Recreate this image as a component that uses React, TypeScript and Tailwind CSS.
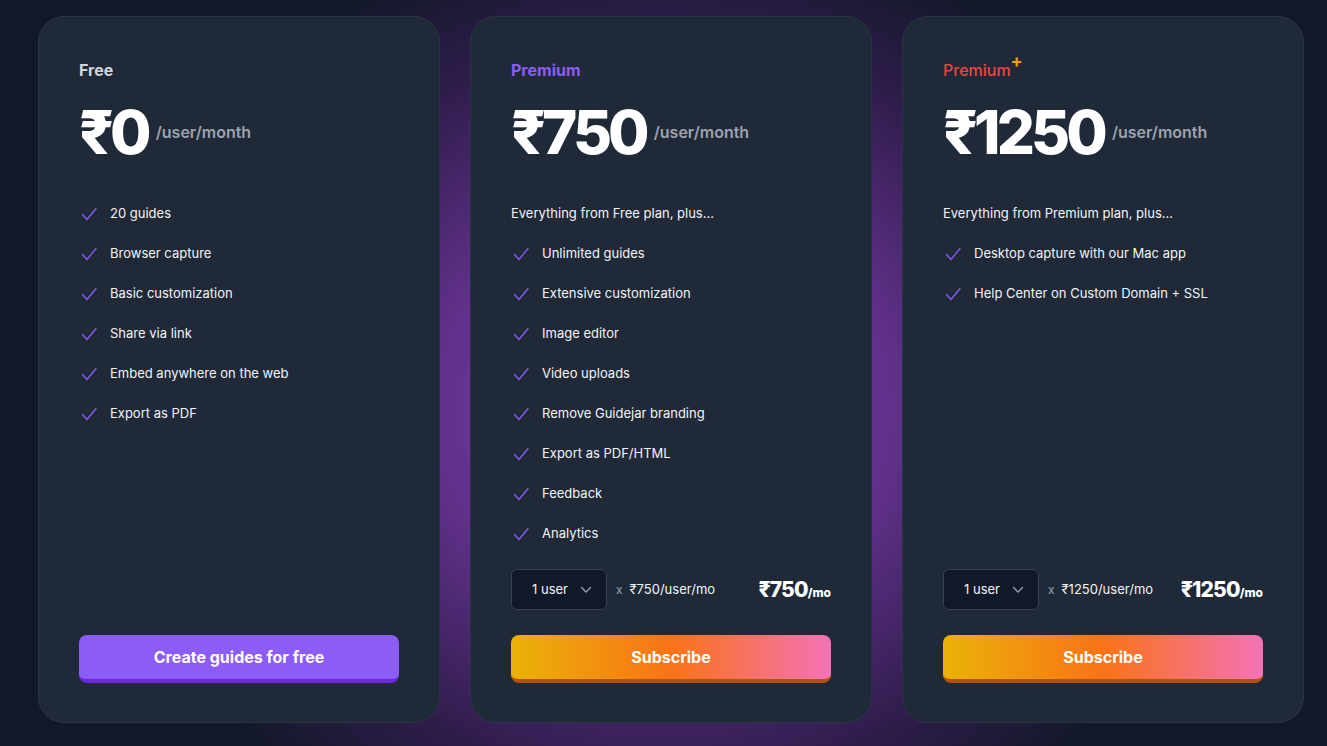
import React from "react";

const Check = () => (
  <svg width="16" height="14" viewBox="0 0 16 14" fill="none" className="shrink-0">
    <path d="M1.5 7.5 L6 12.5 L15 1.5" stroke="#8b5cf6" strokeWidth="1.3" strokeLinecap="round" strokeLinejoin="round" />
  </svg>
);

const Chevron = () => (
  <svg width="12" height="8" viewBox="0 0 12 8" fill="none">
    <path d="M1.5 1.5 L6 6 L10.5 1.5" stroke="#9ca3af" strokeWidth="1.3" strokeLinecap="round" strokeLinejoin="round" />
  </svg>
);

type Plan = {
  title: React.ReactNode;
  price: string;
  intro?: string;
  features: string[];
  perUser?: string;
  total?: string;
  button: string;
  free?: boolean;
};

const plans: Plan[] = [
  {
    title: <span className="text-[#d1d5db] font-bold">Free</span>,
    price: "₹0",
    features: ["20 guides", "Browser capture", "Basic customization", "Share via link", "Embed anywhere on the web", "Export as PDF"],
    button: "Create guides for free",
    free: true,
  },
  {
    title: <span className="text-[#8b5cf6] font-bold">Premium</span>,
    price: "₹750",
    intro: "Everything from Free plan, plus...",
    features: ["Unlimited guides", "Extensive customization", "Image editor", "Video uploads", "Remove Guidejar branding", "Export as PDF/HTML", "Feedback", "Analytics"],
    perUser: "₹750/user/mo",
    total: "₹750",
    button: "Subscribe",
  },
  {
    title: (
      <span className="text-[#ef4444] font-medium relative">
        Premium
        <span className="absolute -top-[8px] -right-[12px] text-[#f59e0b] text-[18px] font-bold leading-none">+</span>
      </span>
    ),
    price: "₹1250",
    intro: "Everything from Premium plan, plus...",
    features: ["Desktop capture with our Mac app", "Help Center on Custom Domain + SSL"],
    perUser: "₹1250/user/mo",
    total: "₹1250",
    button: "Subscribe",
  },
];

function Card({ plan }: { plan: Plan }) {
  return (
    <div className="w-[402px] h-[707px] shrink-0 rounded-[26px] bg-[#1f2937] border border-[#2b3545] px-[40px] pt-[42px] pb-[39px] flex flex-col">
      <div className="text-[16px] leading-[22px] h-[22px]">{plan.title}</div>
      <div className="flex items-center mt-[18px] h-[66px]">
        <span className="text-[60px] leading-none font-extrabold text-white tracking-[-0.065em]">{plan.price}</span>
        <span className="ml-[8px] text-[16px] font-semibold text-[#9ca3af]">/user/month</span>
      </div>
      <div className="mt-[29px] flex flex-col">
        {plan.intro && (
          <div className="h-[40px] flex items-center text-[13px] text-[#f3f4f6]">{plan.intro}</div>
        )}
        {plan.features.map((f) => (
          <div key={f} className="h-[40px] flex items-center gap-[13px] pl-[2px] text-[13px] text-[#f3f4f6]">
            <Check />
            <span>{f}</span>
          </div>
        ))}
      </div>
      <div className="mt-auto">
        {plan.perUser && (
          <div className="flex items-center mb-[25px]">
            <div className="w-[96px] h-[41px] rounded-[6px] bg-[#111827] border border-[#374151] flex items-center justify-between pl-[20px] pr-[14px] text-[13px] text-[#f3f4f6]">
              <span>1 user</span>
              <Chevron />
            </div>
            <span className="ml-[9px] text-[12px] text-[#9ca3af]">x</span>
            <span className="ml-[7px] text-[13px] text-[#f3f4f6]">{plan.perUser}</span>
            <span className="ml-auto flex items-baseline text-white font-extrabold">
              <span className="text-[21px] tracking-[-0.04em]">{plan.total}</span>
              <span className="text-[12px]">/mo</span>
            </span>
          </div>
        )}
        <button
          className={
            plan.free
              ? "w-[320px] h-[48px] rounded-[8px] bg-[#8b5cf6] border-b-[4px] border-[#6d28d9] text-white font-bold text-[16px]"
              : "w-[320px] h-[48px] rounded-[8px] bg-[linear-gradient(90deg,#eab308_0%,#f97316_50%,#f472b6_100%)] border-b-[4px] border-[#b45309] text-white font-bold text-[16px]"
          }
        >
          {plan.button}
        </button>
      </div>
    </div>
  );
}

export default function App() {
  return (
    <div
      className="w-full h-screen overflow-hidden bg-[#111827] bg-[radial-gradient(ellipse_560px_500px_at_50%_55%,#7a3dab_0%,#62318c_40%,#2e1c4a_75%,#111827_100%)] flex gap-[30px] pl-[38px] pt-[16px]"
      style={{ fontFamily: 'Inter, "Noto Sans", sans-serif' }}
    >
      {plans.map((p, i) => (
        <Card key={i} plan={p} />
      ))}
    </div>
  );
}
